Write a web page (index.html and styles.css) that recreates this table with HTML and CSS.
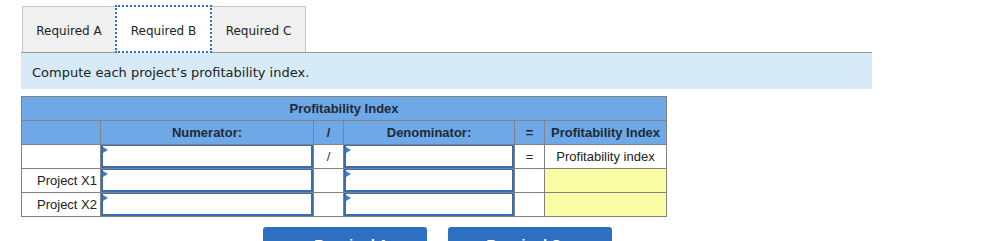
FILE: index.html
```html
<!DOCTYPE html>
<html>
<head>
<meta charset="utf-8">
<link rel="stylesheet" href="styles.css">
</head>
<body>
<div class="page">
  <div class="tabs">
    <div class="tab">Required A</div>
    <div class="tab active">Required B</div>
    <div class="tab">Required C</div>
  </div>
  <div class="panel">
    <div class="prompt">Compute each project’s profitability index.</div>
  </div>
  <table class="grid">
    <colgroup>
      <col class="c-label"><col class="c-num"><col class="c-op"><col class="c-den"><col class="c-op"><col class="c-res">
    </colgroup>
    <tr class="head">
      <th colspan="6">Profitability Index</th>
    </tr>
    <tr class="head">
      <th></th>
      <th>Numerator:</th>
      <th>/</th>
      <th>Denominator:</th>
      <th>=</th>
      <th>Profitability Index</th>
    </tr>
    <tr>
      <td></td>
      <td class="in"><div class="box"></div></td>
      <td class="op">/</td>
      <td class="in"><div class="box"></div></td>
      <td class="op">=</td>
      <td class="res">Profitability index</td>
    </tr>
    <tr>
      <td class="label">Project X1</td>
      <td class="in"><div class="box"></div></td>
      <td></td>
      <td class="in"><div class="box"></div></td>
      <td></td>
      <td class="yellow"></td>
    </tr>
    <tr>
      <td class="label">Project X2</td>
      <td class="in"><div class="box"></div></td>
      <td></td>
      <td class="in"><div class="box"></div></td>
      <td></td>
      <td class="yellow"></td>
    </tr>
  </table>
  <div class="nav">
    <div class="btn">&lsaquo;&nbsp; Required A</div>
    <div class="btn">Required C &nbsp;&rsaquo;</div>
  </div>
</div>
</body>
</html>
```

FILE: styles.css
```css
html, body {
  margin: 0;
  padding: 0;
  background: #ffffff;
  overflow: hidden;
}
.page {
  padding: 6px 0 0 21px;
  width: 851px;
}
.tabs {
  display: flex;
  margin-left: 1px;
  height: 46px;
  position: relative;
  z-index: 1;
}
.tab {
  box-sizing: border-box;
  height: 46px;
  width: 94px;
  border: 1px solid #c6c6c6;
  border-bottom: none;
  background: #f0f0f0;
  font-family: "DejaVu Sans", Verdana, sans-serif;
  font-size: 12px;
  color: #222;
  display: flex;
  align-items: center;
  justify-content: center;
  padding-top: 2px;
}
.tab + .tab {
  border-left: none;
}
.tab.active {
  background: #ffffff;
  width: 97px;
  height: 48px;
  margin-top: -1px;
  margin-left: -1px;
  border: 2px dotted #2b6fd2;
  padding-top: 3px;
}
.panel {
  border-top: 1px solid #9a9a9a;
  background: #d6eaf8;
  height: 36px;
  display: flex;
  align-items: center;
}
.prompt {
  font-family: "DejaVu Sans", Verdana, sans-serif;
  font-size: 13px;
  color: #222;
  padding-left: 11px;
  padding-top: 2px;
}
.grid {
  margin-top: 7px;
  border-collapse: collapse;
  table-layout: fixed;
  width: 645px;
  font-family: "Liberation Sans", Arial, sans-serif;
  font-size: 13px;
  color: #222;
}
.c-label { width: 79px; }
.c-num { width: 213px; }
.c-op { width: 30px; }
.c-den { width: 171px; }
.c-res { width: 122px; }
.grid th, .grid td {
  border: 1px solid #828282;
  height: 23px;
  padding: 0;
  text-align: center;
  vertical-align: middle;
  white-space: nowrap;
}
.grid th {
  background: #6ea8e6;
  font-weight: bold;
  color: #1f2a36;
}
.grid td.label {
  text-align: right;
  padding-right: 3px;
}
.grid td.op {
  color: #333;
}
.grid td.yellow {
  background: #fbfda6;
}
.grid td.in {
  padding: 0;
}
.box {
  box-sizing: border-box;
  height: 23px;
  border: 2px solid #3a6cb2;
  border-top-width: 1px;
  background: #fff;
  position: relative;
}
.box::before {
  content: "";
  position: absolute;
  left: 0;
  top: 1px;
  border-left: 5px solid #3b7fd9;
  border-top: 3px solid transparent;
  border-bottom: 3px solid transparent;
}
.nav {
  display: flex;
  gap: 21px;
  margin-top: 10px;
  margin-left: 242px;
}
.btn {
  width: 164px;
  height: 32px;
  background: #2d6fc0;
  border-radius: 3px;
  color: #fff;
  font-family: "Liberation Sans", Arial, sans-serif;
  font-weight: bold;
  font-size: 14px;
  display: flex;
  justify-content: center;
  padding-top: 10px;
  box-sizing: border-box;
}
```
